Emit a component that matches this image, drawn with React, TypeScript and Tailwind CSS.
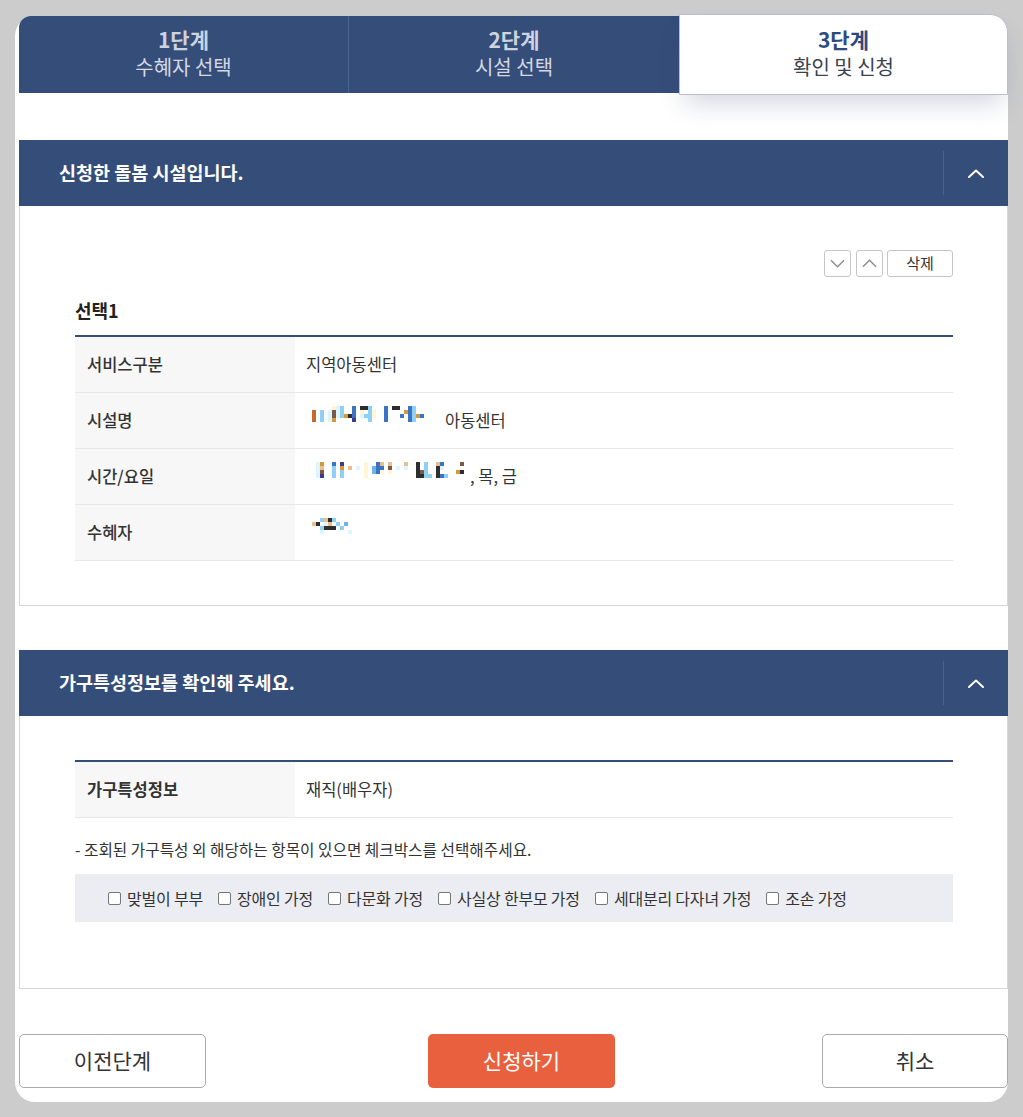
import React from "react";

const palette: Record<string, string> = {
  o: "#c4692f",
  b: "#8fd0f6",
  B: "#3b74c4",
  k: "#2e2e2e",
  y: "#fff7d1",
  c: "#dcf6ff",
  m: "#7b5a4a",
  g: "#d6963a",
  p: "#3d3a8e",
  t: "#e7c08e",
  l: "#6cb3e6",
};

function Mosaic({ rows, className = "" }: { rows: string[]; className?: string }) {
  return (
    <div className={"flex flex-col shrink-0 " + className}>
      {rows.map((r, i) => (
        <div key={i} className="flex">
          {r.split("").map((ch, j) => (
            <span
              key={j}
              className="block w-[4px] h-[4px]"
              style={{ backgroundColor: palette[ch] ?? "transparent" }}
            />
          ))}
        </div>
      ))}
    </div>
  );
}

const mosaicName = [
  ".....ycb..B.kkb...B.kk..Bb..",
  "o.b.cmcb..B.y.by..B....gBb..",
  "o.b.cmcbgkB.cbby..B...B.BbgB",
  "o.b.cg....p...b...B.....Bb..",
];
const mosaicTime = [
  "cg..B.p.....y..Bt.t...t..k.b..tB....m",
  "ct..b.g.t.c.y.lBB.m.c.c..k.b..kc.....",
  "cm..b.b.....y.lBy.y......kmb..k....gk",
  "cp..b.b.....y............kkbb.kBb....",
];
const mosaicPerson = [
  "..btkb.....",
  "tk.ct.b.l..",
  "..bkkk.b...",
  "..c......c.",
];

function ChevronUp({ className = "" }: { className?: string }) {
  return (
    <svg viewBox="0 0 16 9" className={className} fill="none">
      <path d="M1 8L8 1.5L15 8" stroke="currentColor" strokeWidth="2" strokeLinecap="round" strokeLinejoin="round" />
    </svg>
  );
}
function ChevronSmall({ up }: { up?: boolean }) {
  return (
    <svg viewBox="0 0 16 9" className="w-[15px] h-[9px] text-[#8a8a8a]" fill="none">
      {up ? (
        <path d="M1 8L8 1L15 8" stroke="currentColor" strokeWidth="1.4" />
      ) : (
        <path d="M1 1L8 8L15 1" stroke="currentColor" strokeWidth="1.4" />
      )}
    </svg>
  );
}

function SectionHeader({ title }: { title: string }) {
  return (
    <div className="h-[66px] bg-[#354d79] flex items-center">
      <div className="pl-[40px] text-white font-bold text-[18.5px]">{title}</div>
      <div className="ml-auto h-[44px] w-[65px] border-l border-[#4b6291] flex items-center justify-center">
        <ChevronUp className="w-[16px] h-[9px] text-white" />
      </div>
    </div>
  );
}

function Row({ label, children, bold }: { label: string; children: React.ReactNode; bold?: boolean }) {
  return (
    <div className="flex h-[56px] border-b border-[#e8e8e8]">
      <div
        className={
          "w-[220px] shrink-0 bg-[#f7f7f7] pl-[12px] flex items-center text-[16.5px] text-[#333] " +
          (bold ? "font-bold" : "font-medium")
        }
      >
        {label}
      </div>
      <div className="flex items-center pl-[11px] text-[16.5px] text-[#333]">{children}</div>
    </div>
  );
}

const options = ["맞벌이 부부", "장애인 가정", "다문화 가정", "사실상 한부모 가정", "세대분리 다자녀 가정", "조손 가정"];

export default function App() {
  return (
    <div className="min-h-[1117px] bg-[#cccccc] pt-[16px] pl-[15px] font-['Noto_Sans_CJK_KR','Noto_Sans',sans-serif]">
      <div className="relative w-[993px] h-[1086px] bg-white rounded-[20px] pl-[4px]">
        {/* Tabs */}
        <div className="flex h-[77px]">
          <div className="flex w-[660px] bg-[#354d79] rounded-tl-[12px]">
            <div className="w-[330px] border-r border-[#4a6190] flex flex-col items-center pt-[11px]">
              <div className="text-[21px] leading-[24px] font-bold text-[#cdd3df]">1단계</div>
              <div className="mt-[3px] text-[20px] leading-[26px] text-[#d3d8e2]">수혜자 선택</div>
            </div>
            <div className="w-[330px] flex flex-col items-center pt-[11px]">
              <div className="text-[21px] leading-[24px] font-bold text-[#cdd3df]">2단계</div>
              <div className="mt-[3px] text-[20px] leading-[26px] text-[#d3d8e2]">시설 선택</div>
            </div>
          </div>
          <div className="relative z-10 -mt-[2px] w-[329px] h-[81px] bg-white border border-[#b9c0cc] rounded-tr-[18px] flex flex-col items-center pt-[12px] shadow-[0_14px_26px_-6px_rgba(50,70,110,0.22)]">
            <div className="text-[21px] leading-[24px] font-bold text-[#2e4a7d]">3단계</div>
            <div className="mt-[3px] text-[20px] leading-[26px] text-[#39424f]">확인 및 신청</div>
          </div>
        </div>

        {/* Section 1 */}
        <div className="mt-[47px]">
          <SectionHeader title="신청한 돌봄 시설입니다." />
          <div className="border-x border-b border-[#d6d6d6] pl-[55px] pr-[54px] pt-[44px] pb-[44px]">
            <div className="flex justify-end">
              <button className="w-[27px] h-[27px] border border-[#c6c6c6] rounded-[3px] flex items-center justify-center bg-white">
                <ChevronSmall />
              </button>
              <button className="ml-[5px] w-[27px] h-[27px] border border-[#c6c6c6] rounded-[3px] flex items-center justify-center bg-white">
                <ChevronSmall up />
              </button>
              <button className="ml-[4px] w-[66px] h-[27px] border border-[#c6c6c6] rounded-[3px] flex items-center justify-center bg-white text-[15px] text-[#333]">
                삭제
              </button>
            </div>
            <div className="mt-[21px] mb-[13px] text-[18px] leading-[24px] font-bold text-[#222]">선택1</div>
            <div className="relative border-t-2 border-[#354d79]">
              <Row label="서비스구분">지역아동센터</Row>
              <Row label="시설명">
                <Mosaic rows={mosaicName} className="ml-[6px] mb-[14px]" />
                <span className="ml-[21px]">아동센터</span>
              </Row>
              <Row label="시간/요일">
                <Mosaic rows={mosaicTime} className="ml-[10px] mb-[14px]" />
                <span className="ml-[6px]">, 목, 금</span>
              </Row>
              <Row label="수혜자">
                <Mosaic rows={mosaicPerson} className="ml-[6px] mb-[14px]" />
              </Row>
              {/* redaction patches */}
              <div className="absolute left-[220px] top-[57px] w-[32px] h-[1px] bg-white" />
              <div className="absolute left-[330px] top-[57px] w-[65px] h-[1px] bg-white" />
              <div className="absolute left-[220px] top-[113px] w-[167px] h-[1px] bg-white" />
              <div className="absolute left-[220px] top-[169px] w-[174px] h-[1px] bg-white" />
              <div className="absolute left-[215px] top-[225px] w-[152px] h-[1px] bg-white" />
            </div>
          </div>
        </div>

        {/* Section 2 */}
        <div className="mt-[44px]">
          <SectionHeader title="가구특성정보를 확인해 주세요." />
          <div className="border-x border-b border-[#d6d6d6] pl-[55px] pr-[54px] pt-[44px] pb-[66px]">
            <div className="border-t-2 border-[#354d79]">
              <Row label="가구특성정보" bold>
                재직(배우자)
              </Row>
            </div>
            <div className="mt-[22px] text-[15.7px] leading-[20px] text-[#333]">
              - 조회된 가구특성 외 해당하는 항목이 있으면 체크박스를 선택해주세요.
            </div>
            <div className="mt-[14px] h-[48px] bg-[#ecedf2] flex items-center pl-[33px] gap-[15px]">
              {options.map((o) => (
                <label key={o} className="flex items-center gap-[6px] text-[16px] text-[#333] tracking-[-0.2px]">
                  <span className="block w-[13px] h-[13px] border border-[#767676] rounded-[2px] bg-white" />
                  {o}
                </label>
              ))}
            </div>
          </div>
        </div>

        {/* Footer buttons */}
        <div className="mt-[45px] flex">
          <button className="w-[187px] h-[54px] border border-[#aaaaaa] rounded-[5px] bg-white text-[21px] text-[#333]">
            이전단계
          </button>
          <button className="ml-[222px] w-[187px] h-[54px] rounded-[5px] bg-[#e9603f] text-[21px] text-white">
            신청하기
          </button>
          <button className="ml-auto w-[186px] h-[54px] border border-[#aaaaaa] rounded-[5px] bg-white text-[21px] text-[#333]">
            취소
          </button>
        </div>
      </div>
    </div>
  );
}
